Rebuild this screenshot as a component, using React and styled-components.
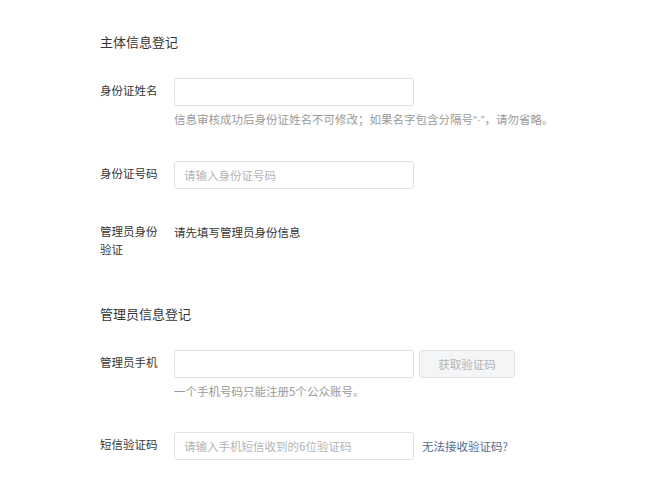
import styled, { createGlobalStyle } from 'styled-components';

const GlobalStyle = createGlobalStyle`
  body {
    margin: 0;
    background: #fff;
    font-family: "Noto Sans CJK SC", "Noto Sans", sans-serif;
    color: #353535;
  }
`;

const Page = styled.div`
  padding: 32px 0 0 100px;
`;

const Section = styled.section`
  margin-bottom: ${p => p.$gap || 0}px;
`;

const SectionTitle = styled.h3`
  margin: 0 0 26px;
  font-size: 13px;
  font-weight: 400;
  line-height: 20px;
  color: #353535;
`;

const Row = styled.div`
  display: flex;
  align-items: flex-start;
  margin-bottom: ${p => (p.$last ? 0 : 30)}px;
`;

const Label = styled.label`
  flex: none;
  width: 60px;
  margin-right: 14px;
  padding-top: 3px;
  font-size: 11.5px;
  line-height: 18px;
  color: #353535;
`;

const Field = styled.div`
  display: flex;
  flex-direction: column;
`;

const Line = styled.div`
  display: flex;
  align-items: center;
`;

const Input = styled.input`
  box-sizing: border-box;
  width: 240px;
  height: 28px;
  padding: 0 9px;
  border: 1px solid #e2e2e2;
  border-radius: 3px;
  font-family: inherit;
  font-size: 11.5px;
  color: #353535;
  outline: none;
  &::placeholder {
    color: #b4b4b4;
  }
`;

const CodeButton = styled.button`
  box-sizing: border-box;
  width: 96px;
  height: 28px;
  margin-left: 5px;
  border: 1px solid #e2e2e2;
  border-radius: 3px;
  background: #f4f5f7;
  font-family: inherit;
  font-size: 11.5px;
  color: #b4b4b4;
`;

const Hint = styled.p`
  margin: 3px 0 1px;
  font-size: 11.5px;
  line-height: 20px;
  color: #9a9a9a;
`;

const Quote = styled.span`
  font-family: "Liberation Sans", sans-serif;
`;

const Plain = styled.div`
  font-size: 11.5px;
  line-height: 28px;
  color: #353535;
  margin-top: -1px;
`;

const HelpLink = styled.a`
  margin-left: 8px;
  font-size: 11.5px;
  color: #576b95;
  text-decoration: none;
`;

const App = () => {
  return (
    <Page>
      <GlobalStyle />
      <Section $gap={46}>
        <SectionTitle>主体信息登记</SectionTitle>
        <Row>
          <Label>身份证姓名</Label>
          <Field>
            <Input />
            <Hint>
              信息审核成功后身份证姓名不可修改；如果名字包含分隔号<Quote>“·”</Quote>，请勿省略。
            </Hint>
          </Field>
        </Row>
        <Row>
          <Label>身份证号码</Label>
          <Field>
            <Input placeholder='请输入身份证号码' />
          </Field>
        </Row>
        <Row $last>
          <Label>管理员身份验证</Label>
          <Field>
            <Plain>请先填写管理员身份信息</Plain>
          </Field>
        </Row>
      </Section>
      <Section>
        <SectionTitle>管理员信息登记</SectionTitle>
        <Row>
          <Label>管理员手机</Label>
          <Field>
            <Line>
              <Input />
              <CodeButton type='button'>获取验证码</CodeButton>
            </Line>
            <Hint>一个手机号码只能注册5个公众账号。</Hint>
          </Field>
        </Row>
        <Row>
          <Label>短信验证码</Label>
          <Field>
            <Line>
              <Input placeholder='请输入手机短信收到的6位验证码' />
              <HelpLink href='#'>无法接收验证码?</HelpLink>
            </Line>
          </Field>
        </Row>
      </Section>
    </Page>
  );
};

export default App;
